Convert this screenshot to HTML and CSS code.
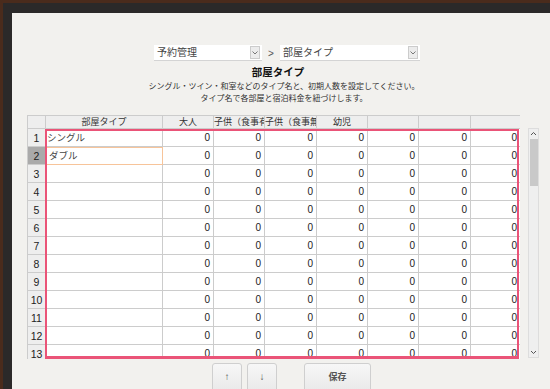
FILE: index.html
```html
<!DOCTYPE html>
<html>
    <head>
        <title>部屋タイプ</title>
        <link rel="stylesheet" href="styles.css">
    </head>
    <body>
        <div class="frame">
            <div class="panel">
                <!-- breadcrumb selects -->
                <div class="crumbs">
                    <div class="select sel-menu">
                        <span>予約管理</span>
                        <b class="drop"><svg width="6" height="4" viewBox="0 0 6 4"><path d="M0.5 0.5 L3 3 L5.5 0.5" fill="none" stroke="#777" stroke-width="1"/></svg></b>
                    </div>
                    <span class="sep">&gt;</span>
                    <div class="select sel-page">
                        <span>部屋タイプ</span>
                        <b class="drop"><svg width="6" height="4" viewBox="0 0 6 4"><path d="M0.5 0.5 L3 3 L5.5 0.5" fill="none" stroke="#777" stroke-width="1"/></svg></b>
                    </div>
                </div>
                <h1 class="title">部屋タイプ</h1>
                <p class="desc">シングル・ツイン・和室などのタイプ名と、初期人数を設定してください。<br>タイプ名で各部屋と宿泊料金を紐づけします。</p>

                <div class="grid">
                    <div class="sheet">
                        <table>
                            <colgroup>
                                <col style="width:18px"><col style="width:117px"><col style="width:51px"><col style="width:51px"><col style="width:52px"><col style="width:51px"><col style="width:51px"><col style="width:52px"><col style="width:50px">
                            </colgroup>
                            <thead>
                                <tr>
                                    <th></th><th>部屋タイプ</th><th>大人</th><th class="clip">子供（食事有</th><th class="clip">子供（食事無</th><th>幼児</th><th></th><th></th><th></th>
                                </tr>
                            </thead>
                            <tbody id="rows"></tbody>
                        </table>
                        <div class="selection"></div>
                    </div>
                    <div class="scrollbar">
                        <svg class="arrow" width="7" height="10" viewBox="0 0 7 10"><path d="M1 6 L3.5 3.5 L6 6" fill="none" stroke="#555" stroke-width="1"/></svg>
                        <div class="thumb"></div>
                        <svg class="arrow down" width="7" height="10" viewBox="0 0 7 10"><path d="M1 4 L3.5 6.5 L6 4" fill="none" stroke="#555" stroke-width="1"/></svg>
                    </div>
                </div>

                <div class="buttons">
                    <button class="btn small">&#8593;</button>
                    <button class="btn small">&#8595;</button>
                    <button class="btn save">保存</button>
                </div>
            </div>
        </div>
        <script>
            // build the 13 rows of the room type sheet
            var names = ["シングル", "ダブル"];
            var html = "";
            for (var i = 1; i <= 13; i++) {
                html += "<tr>";
                html += '<td class="rownum' + (i == 2 ? ' active' : '') + '">' + i + "</td>";
                html += '<td class="name' + (i == 2 ? ' current' : '') + '">' + (names[i - 1] || "") + "</td>";
                for (var c = 0; c < 7; c++) {
                    html += '<td class="num">0</td>';
                }
                html += "</tr>";
            }
            document.getElementById("rows").innerHTML = html;
        </script>
    </body>
</html>
```

FILE: styles.css
```css
body {
    margin: 0;
    height: 389px;
    overflow: hidden;
    background-color: #4a2b1c;
    font-family: "Liberation Sans", "Noto Sans CJK JP", sans-serif;
    color: #333;
}

/* dark inner frame around the page */
.frame {
    margin: 3px 0 0 3px;
    padding: 10px 0 0 9px;
    background-color: #2b2929;
    height: 376px;
}

.panel {
    background-color: #f2f1ee;
    height: 100%;
    overflow: hidden;
    padding: 32px 0 0 15px;
    box-sizing: border-box;
    width: 538px;
}

/* breadcrumb */
.crumbs {
    display: flex;
    align-items: center;
    width: 514px;
    padding-left: 127px;
    box-sizing: border-box;
}

.select {
    display: flex;
    align-items: center;
    justify-content: space-between;
    height: 16px;
    box-sizing: border-box;
    background-color: #fff;
    border-bottom: 1px solid #d4d4d4;
    font-size: 10px;
    line-height: 14px;
    color: #444;
    padding-left: 3px;
}

.sel-menu {
    width: 108px;
}

.sel-page {
    width: 140px;
}

.drop {
    display: flex;
    align-items: center;
    justify-content: center;
    width: 10px;
    height: 13px;
    margin-right: 2px;
    background-color: #ececec;
    border: 1px solid #ccc;
    box-sizing: border-box;
}

.sep {
    width: 18px;
    text-align: center;
    font-size: 10px;
    color: #555;
}

.title {
    margin: 5px 0 3px 0;
    width: 514px;
    font-size: 10.5px;
    line-height: 12px;
    text-align: center;
    color: #111;
    padding-right: 12px;
    box-sizing: border-box;
}

.desc {
    margin: 0 0 10px 0;
    width: 514px;
    font-size: 8px;
    line-height: 12px;
    text-align: center;
    color: #333;
}

/* spreadsheet */
.grid {
    display: flex;
    align-items: flex-start;
}

.sheet {
    position: relative;
    width: 493px;
    height: 244px;
    overflow: hidden;
}

table {
    border-collapse: collapse;
    table-layout: fixed;
    width: 493px;
}

th {
    height: 12px;
    padding: 0;
    background-color: #eee;
    border: 1px solid #ccc;
    font-size: 9px;
    line-height: 10px;
    font-weight: normal;
    text-align: center;
    white-space: nowrap;
    overflow: hidden;
    color: #333;
}

th.clip {
    text-align: left;
}

td {
    height: 17px;
    padding: 0;
    border: 1px solid #ccc;
    background-color: #fff;
    font-size: 10px;
    line-height: 16px;
    white-space: nowrap;
    overflow: hidden;
    color: #222;
}

td.rownum {
    background-color: #eee;
    text-align: center;
    font-size: 10.5px;
}

td.rownum.active {
    background-color: #aaa;
}

td.name {
    padding-left: 1px;
    font-size: 9.5px;
    color: #444;
}

td.current {
    outline: 1px solid #f7c49a;
    outline-offset: -1px;
    padding-left: 3px;
}

td.num {
    text-align: right;
    padding-right: 3px;
}

/* selected range */
.selection {
    position: absolute;
    left: 18px;
    top: 14px;
    width: 474px;
    height: 230px;
    box-sizing: border-box;
    border: 2px solid #ea5478;
    border-bottom-width: 3px;
}

.scrollbar {
    display: flex;
    flex-direction: column;
    align-items: center;
    margin: 13px 0 0 8px;
    width: 11px;
    height: 230px;
    box-sizing: border-box;
    background-color: #efefef;
    border: 1px solid #ddd;
}

.arrow {
    flex: none;
}

.thumb {
    width: 8px;
    height: 47px;
    background-color: #c9c9c9;
}

.arrow.down {
    margin-top: auto;
}

/* buttons below the sheet */
.buttons {
    display: flex;
    gap: 5px;
    margin-top: 4px;
    padding-left: 185px;
}

.btn {
    height: 30px;
    border: 1px solid #cfcfcf;
    border-radius: 3px;
    background: linear-gradient(#f7f7f7, #e9e9e9);
    font-family: "Liberation Sans", "Noto Sans CJK JP", sans-serif;
    font-size: 10px;
    color: #555;
    padding: 0 0 4px 0;
}

.small {
    width: 30px;
}

.save {
    width: 67px;
    margin-left: 22px;
    font-size: 9px;
    font-weight: bold;
}
```
